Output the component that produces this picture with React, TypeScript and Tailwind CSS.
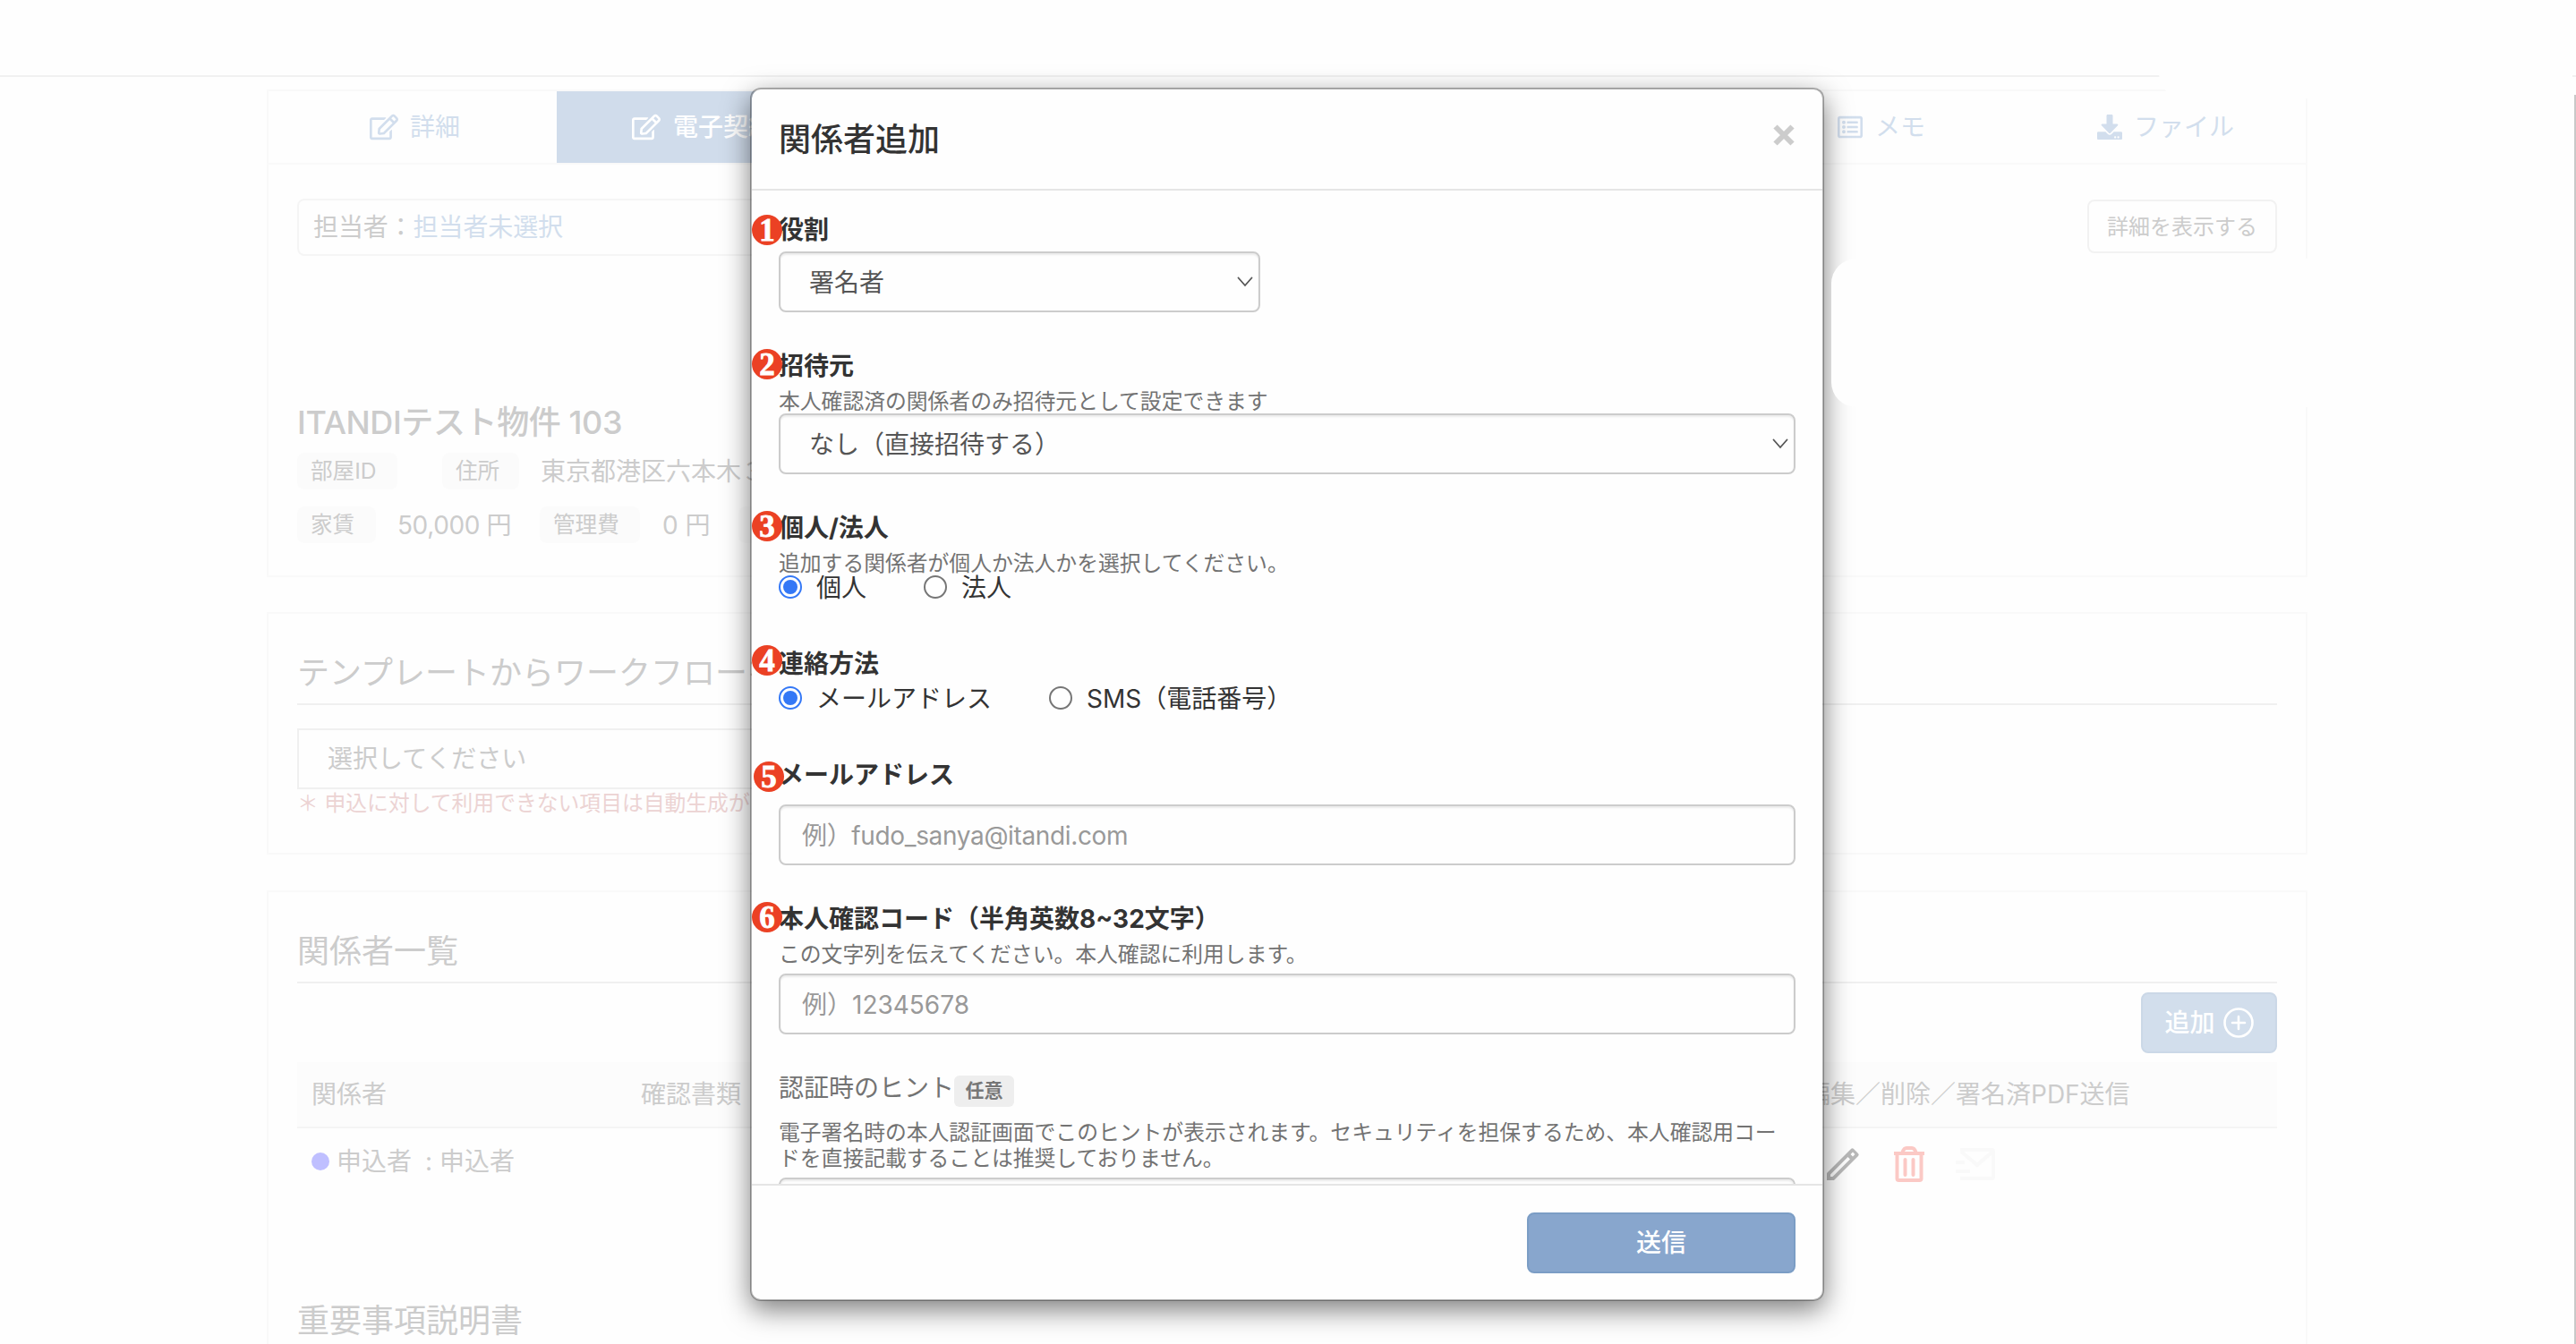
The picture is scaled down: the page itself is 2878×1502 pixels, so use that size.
import React, { useState } from "react";
import { FaRegEdit, FaRegListAlt, FaDownload } from "react-icons/fa";

const StepBadge = ({ num, className = "" }: { num: number; className?: string }) => (
  <span
    className={`absolute flex items-center justify-center w-[34px] h-[34px] rounded-full bg-[#eb4124] text-white font-bold text-[35px] leading-none [-webkit-text-stroke:0.8px_white] font-['Liberation_Serif',serif] ${className}`}
  >
    {num}
  </span>
);

const FieldLabel = ({ num, children, badge = "-left-[30px] top-[3px]" }: { num: number; children: React.ReactNode; badge?: string }) => (
  <div className="relative h-10 leading-[41px] font-bold text-[#333] whitespace-nowrap">
    {children}
    <StepBadge num={num} className={badge} />
  </div>
);

const HelpText = ({ children }: { children: React.ReactNode }) => (
  <p className="mt-[5px] h-7 leading-[30px] text-[23.8px] text-[#737373] whitespace-nowrap">{children}</p>
);

const SelectBox = ({ value, className = "" }: { value: string; className?: string }) => (
  <div
    className={`flex items-center justify-between h-[68px] pl-8 pr-[6px] border-2 border-[#ccc] rounded-lg text-[#555] shadow-[inset_0_2px_2px_rgba(0,0,0,0.075)] ${className}`}
  >
    <span className="pt-[2px]">{value}</span>
    <svg width="18" height="12" viewBox="0 0 18 12" fill="none" stroke="#555" strokeWidth="1.8" strokeLinecap="round">
      <path d="M1.5 1.5 L9 10 L16.5 1.5" />
    </svg>
  </div>
);

const TextBox = ({ placeholder = "", className = "" }: { placeholder?: string; className?: string }) => (
  <input
    type="text"
    placeholder={placeholder}
    className={`block w-full h-[68px] px-6 pt-[2px] border-2 border-[#ccc] rounded-lg bg-transparent placeholder:text-[#999] placeholder:opacity-100 shadow-[inset_0_2px_2px_rgba(0,0,0,0.075)] outline-none ${className}`}
  />
);

const Radio = ({ label, checked, onSelect }: { label: string; checked: boolean; onSelect: () => void }) => (
  <div className="flex items-center h-[26px] text-[#333] whitespace-nowrap cursor-pointer" onClick={onSelect}>
    <span
      className={`flex items-center justify-center w-[26px] h-[26px] mr-4 rounded-full bg-white border-2 ${
        checked ? "border-[#3478f6]" : "border-[#767676]"
      }`}
    >
      {checked && <span className="w-4 h-4 rounded-full bg-[#3478f6]" />}
    </span>
    <span className="pt-[2px]">{label}</span>
  </div>
);

const Tag = ({ children, className = "" }: { children: React.ReactNode; className?: string }) => (
  <span className={`flex items-center h-[41px] pl-[15px] rounded-lg bg-[#fbfbfb] text-[24.6px] ${className}`}>{children}</span>
);

const SectionTitle = ({ children }: { children: React.ReactNode }) => (
  <h2 className="h-[54px] leading-[56px] text-[36px] text-[#ccc] whitespace-nowrap">{children}</h2>
);

const Background = () => (
  <div className="text-[#ccc]">
    <header className="h-[86px] border-b-2 border-[#f1f1f1]" />

    <main className="w-[2280px] ml-[298px] mt-[14px]">
      {/* 物件情報 */}
      <section className="h-[545px] border-2 border-[#f9f9f9]">
        <nav className="flex h-[82px] border-b-2 border-[#f9f9f9] text-[#d2deed] whitespace-nowrap">
          <div className="flex items-center justify-center gap-[13px] w-[322px] pl-[5px]">
            <FaRegEdit size={32} />
            詳細
          </div>
          <div className="flex items-center gap-[14px] w-[330px] pl-[84px] bg-[#d0dceb] text-white">
            <FaRegEdit size={32} />
            <span className="font-medium">電子契約</span>
          </div>
          <div className="flex-1" />
          <div className="flex items-center gap-[14px] w-[290px]">
            <FaRegListAlt size={28} />
            メモ
          </div>
          <div className="flex items-center gap-[13px] w-[233px]">
            <FaDownload size={28} />
            ファイル
          </div>
        </nav>

        <div className="flex justify-between px-8 pt-[38px]">
          <div className="flex items-center w-[1200px] h-16 pl-[16px] border-2 border-[#f5f5f5] rounded-lg tracking-[-0.1px]">
            担当者：<span className="text-[#d2deed]">担当者未選択</span>
          </div>
          <div className="flex items-center justify-center w-[212px] h-[60px] mt-px pt-px border-2 border-[#f2f2f2] rounded-lg text-[24px]">
            詳細を表示する
          </div>
        </div>

        <div className="pl-8 pt-[158px]">
          <h1 className="h-[54px] leading-[56px] text-[36px] font-medium tracking-[-0.4px]">ITANDIテスト物件 103</h1>
          <div className="flex items-center mt-2 whitespace-nowrap">
            <Tag className="w-[112px]">部屋ID</Tag>
            <Tag className="w-[86px] ml-[50px]">住所</Tag>
            <span className="ml-[24px]">東京都港区六本木３丁目</span>
          </div>
          <div className="flex items-center mt-[19px] whitespace-nowrap">
            <Tag className="w-[88px]">家賃</Tag>
            <span className="w-[159px] ml-6 tracking-[-0.4px]">50,000 円</span>
            <Tag className="w-[112px]">管理費</Tag>
            <span className="ml-[25px] w-[85px]">0 円</span>
            <Tag className="w-[112px]">敷金</Tag>
          </div>
        </div>
      </section>

      {/* テンプレート */}
      <section className="h-[271px] mt-[39px] px-8 pt-[38px] border-2 border-[#f9f9f9]">
        <SectionTitle>テンプレートからワークフローを作成</SectionTitle>
        <div className="mt-2 h-[2px] bg-[#f0f0f0]" />
        <div className="flex items-center w-[1200px] h-[68px] mt-[26px] pl-8 border-2 border-[#f0f0f0]">選択してください</div>
        <p className="h-8 leading-8 text-[23.8px] text-[#ecd3d3] whitespace-nowrap">＊&nbsp;申込に対して利用できない項目は自動生成がされません</p>
      </section>

      {/* 関係者一覧 */}
      <section className="h-[600px] mt-10 px-8 pt-[38px] border-2 border-[#f9f9f9]">
        <SectionTitle>関係者一覧</SectionTitle>
        <div className="mt-2 h-[2px] bg-[#f0f0f0]" />
        <div className="flex justify-end mt-[10px]">
          <button className="flex items-center justify-center gap-[9px] w-[152px] h-[68px] border-2 border-[#cbd8e7] rounded-lg bg-[#d2deec] text-white font-medium">
            追加
            <svg width="34" height="34" viewBox="0 0 34 34" fill="none" stroke="#fff" strokeWidth="2.6" strokeLinecap="round">
              <circle cx="17" cy="17" r="15.5" />
              <path d="M17 10 V24 M10 17 H24" />
            </svg>
          </button>
        </div>
        <div className="flex items-center h-[74px] mt-[10px] pl-4 border-b-2 border-[#f4f4f4] bg-[#fcfcfc] whitespace-nowrap">
          <span className="w-[368px]">関係者</span>
          <span className="w-[1301px]">確認書類</span>
          <span>編集／削除／署名済PDF送信</span>
        </div>
        <div className="flex items-center h-[80px] pl-4 whitespace-nowrap">
          <div className="flex items-center w-[1691px] pb-[7px]">
            <span className="w-5 h-5 mr-[8px] rounded-full bg-[#bfbfff]" />
            <span className="w-[99px]">申込者</span>
            <span className="w-[16px]">:</span>
            <span>申込者</span>
          </div>
          <div className="flex items-center gap-[36px]">
            <svg width="40" height="40" viewBox="0 0 40 40" fill="#b8b8b8" fillRule="evenodd">
              <path d="M2 30 L29 3 Q30.5 1.5 32 3 L37 8 Q38.5 9.5 37 11 L10 38 H2 Z M6 34 H8.500 L28 14.500 L25.500 12 L6 31.500 Z M28.500 9 L31 11.500 L33.500 9 L31 6.500 Z" />
            </svg>
            <svg width="36" height="40" viewBox="0 0 36 40" fill="none" stroke="#fbc9c5" strokeWidth="4">
              <path d="M1 8 H35 M4.5 8 V36 Q4.5 38 6.5 38 H29.5 Q31.5 38 31.5 36 V8 M10.5 7 Q12 2 15 2 H21 Q24 2 25.5 7" />
              <path d="M13.5 15 V32 M22.5 15 V32" strokeLinecap="round" />
            </svg>
            <svg width="44" height="36" viewBox="0 0 44 36" fill="none" stroke="#f9f9f9" strokeWidth="4" className="-ml-[2px]">
              <path d="M5 2 H40 Q42 2 42 4 V32 Q42 34 40 34 H5 M6 4 L24 19 L41 4 M0 16 H10 M0 26 H16" />
            </svg>
          </div>
        </div>
        <div className="mt-[107px]">
          <SectionTitle>重要事項説明書</SectionTitle>
        </div>
      </section>
    </main>
  </div>
);

const AddPersonModal = () => {
  const [personType, setPersonType] = useState("個人");
  const [contact, setContact] = useState("mail");

  return (
    <div className="w-[1200px] h-[1356px] rounded-xl border-2 border-black/30 bg-[#fefefe] bg-clip-padding shadow-[0_10px_30px_rgba(0,0,0,0.5)]">
      {/* Header */}
      <div className="flex items-center justify-between h-[113px] pl-[30px] pr-[31px] border-b-2 border-[#e5e5e5]">
        <h4 className="text-[36px] font-medium text-[#333]">関係者追加</h4>
        <svg width="24" height="24" viewBox="0 0 24 24" stroke="#ccc" strokeWidth="6" className="-mt-[9px]">
          <path d="M2.5 2.5 L21.5 21.5 M21.5 2.5 L2.5 21.5" />
        </svg>
      </div>

      {/* Body */}
      <div className="h-[1110px] px-[30px] pt-6 overflow-hidden">
        <FieldLabel num={1}>役割</FieldLabel>
        <SelectBox value="署名者" className="w-[538px] mt-1" />

        <div className="mt-10">
          <FieldLabel num={2} badge="-left-[30px] top-px">招待元</FieldLabel>
          <HelpText>本人確認済の関係者のみ招待元として設定できます</HelpText>
          <SelectBox value="なし（直接招待する）" />
        </div>

        <div className="mt-10">
          <FieldLabel num={3} badge="-left-[30px] top-px">個人/法人</FieldLabel>
          <HelpText>追加する関係者が個人か法人かを選択してください。</HelpText>
          <div className="flex gap-[64px]">
            <Radio label="個人" checked={personType === "個人"} onSelect={() => setPersonType("個人")} />
            <Radio label="法人" checked={personType === "法人"} onSelect={() => setPersonType("法人")} />
          </div>
        </div>

        <div className="mt-[53px]">
          <FieldLabel num={4} badge="-left-[30px] -top-px">連絡方法</FieldLabel>
          <div className="flex gap-[64px] mt-[5px]">
            <Radio label="メールアドレス" checked={contact === "mail"} onSelect={() => setContact("mail")} />
            <Radio label="SMS（電話番号）" checked={contact === "sms"} onSelect={() => setContact("sms")} />
          </div>
        </div>

        <div className="mt-[53px]">
          <FieldLabel num={5} badge="-left-[28px] top-[5px]">メールアドレス</FieldLabel>
          <TextBox placeholder="例）fudo_sanya@itandi.com" className="mt-[13px] tracking-[-0.35px]" />
        </div>

        <div className="mt-10">
          <FieldLabel num={6} badge="-left-[30px] top-px">本人確認コード（半角英数8~32文字）</FieldLabel>
          <HelpText>この文字列を伝えてください。本人確認に利用します。</HelpText>
          <TextBox placeholder="例）12345678" className="mt-2" />
        </div>

        <div className="mt-10">
          <div className="flex h-10 leading-10 text-[#737373]">
            認証時のヒント
            <span className="w-[67px] h-[35px] mt-[6px] leading-[33px] rounded-md bg-[#eee] text-center text-[21px] font-bold text-[#777]">任意</span>
          </div>
          <p className="mt-[16px] leading-[28.5px] text-[23.8px] text-[#737373] whitespace-nowrap">
            電子署名時の本人認証画面でこのヒントが表示されます。セキュリティを担保するため、本人確認用コー
            <br />
            ドを直接記載することは推奨しておりません。
          </p>
          <TextBox className="mt-[7px]" />
        </div>
      </div>

      {/* Footer */}
      <div className="flex justify-end px-[30px] pt-[30px] border-t-2 border-[#e5e5e5]">
        <button className="w-[300px] h-[68px] border-2 border-[#7b9dc5] rounded-lg bg-[#88a6cd] text-white font-medium">送信</button>
      </div>
    </div>
  );
};

const App = () => (
  <div className="relative w-[2878px] h-[1502px] overflow-hidden bg-[#fefefe] text-[28px] leading-none font-['Inter','Noto_Sans_CJK_JP',sans-serif]">
    <Background />

    <div className="absolute inset-0 flex justify-center pt-[98px] pr-[2px]">
      <AddPersonModal />
    </div>

    {/* Blank patches over the page */}
    <div className="absolute left-[2412px] top-0 w-[462px] h-[110px] rounded-bl-[28px] bg-[#fefefe]" />
    <div className="absolute left-[2046px] top-[289px] w-[600px] h-[166px] rounded-[28px] bg-[#fefefe]" />

    {/* Scrollbar edge */}
    <div className="absolute right-0 top-[106px] bottom-0 w-[2px] bg-[#c8c8c8]" />
  </div>
);

export default App;
